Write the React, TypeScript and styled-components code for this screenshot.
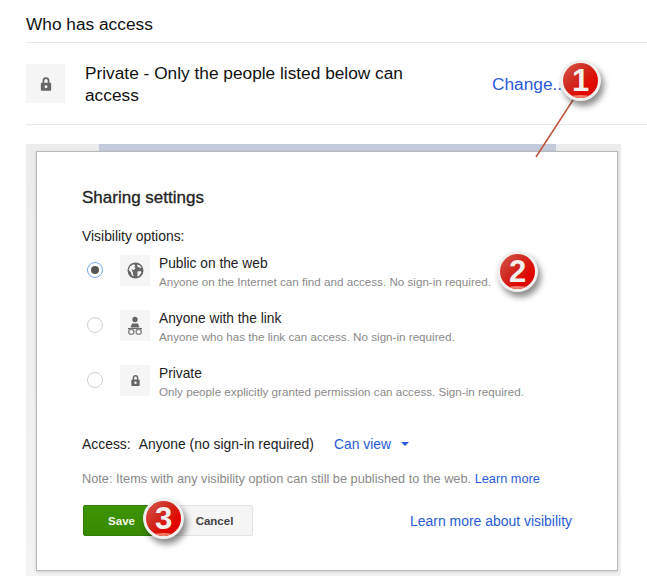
import React from "react";
import styled, { createGlobalStyle } from "styled-components";

const Global = createGlobalStyle`
  html, body { margin: 0; padding: 0; background: #fff; }
  body { font-family: "Liberation Sans", Arial, sans-serif; }
`;

const Page = styled.div`
  position: relative;
  width: 647px;
  height: 585px;
  overflow: hidden;
  background: #fff;
  padding: 0 0 0 26px;
  box-sizing: border-box;
`;

const Heading = styled.div`
  height: 42px;
  line-height: 48px;
  font-size: 17.3px;
  color: #111;
  border-bottom: 1px solid #e8e8e8;
  box-sizing: content-box;
`;

const AccessRow = styled.div`
  display: flex;
  align-items: flex-start;
  border-bottom: 1px solid #e8e8e8;
  padding-top: 21px;
  box-sizing: content-box;
  height: 60px;
`;

const LockTile = styled.div`
  width: 39px;
  height: 39px;
  background: #f5f5f5;
  display: flex;
  align-items: center;
  justify-content: center;
  flex: none;
`;

const AccessText = styled.div`
  width: 345px;
  margin-left: 20px;
  font-size: 17.3px;
  line-height: 22px;
  color: #111;
  margin-top: -2px;
`;

const ChangeLink = styled.a`
  margin-left: 62px;
  margin-top: 9px;
  font-size: 17.3px;
  line-height: 22px;
  color: #2a5bd7;
`;

const Frame = styled.div`
  position: relative;
  margin-top: 19px;
  width: 595px;
  height: 432px;
  background: linear-gradient(#ececec, #f3f3f3);
  padding: 7px 3px 0 10px;
  box-sizing: border-box;
`;

const Band = styled.div`
  position: absolute;
  top: 0;
  left: 73px;
  width: 457px;
  height: 7px;
  background: #c3cada;
`;

const Dialog = styled.div`
  position: relative;
  width: 582px;
  height: 420px;
  background: #fff;
  border: 1px solid #b9b9b9;
  box-sizing: border-box;
  padding: 36px 45px 0 45px;
  box-shadow: 0 1px 3px rgba(0, 0, 0, 0.15);
`;

const Title = styled.div`
  font-size: 17px;
  line-height: 20px;
  font-weight: 400;
  color: #222;
  -webkit-text-stroke: 0.3px #222;
`;

const SectionLabel = styled.div`
  margin-top: 20px;
  font-size: 13.9px;
  line-height: 16px;
  color: #222;
`;

const Options = styled.div`
  margin-top: 11px;
  display: flex;
  flex-direction: column;
  gap: 24px;
`;

const Option = styled.div`
  display: flex;
  align-items: flex-start;
  height: 31px;
`;

const Radio = styled.span<{ $on?: boolean }>`
  flex: none;
  width: 16px;
  height: 16px;
  margin: 7px 17px 0 5px;
  border-radius: 50%;
  border: 1px solid ${(p) => (p.$on ? "#7aa7f5" : "#d0d0d0")};
  box-sizing: border-box;
  display: flex;
  align-items: center;
  justify-content: center;
  &::after {
    content: "";
    display: ${(p) => (p.$on ? "block" : "none")};
    width: 8px;
    height: 8px;
    border-radius: 50%;
    background: #555;
  }
`;

const IconTile = styled.div`
  flex: none;
  width: 30px;
  height: 31px;
  background: #f5f5f5;
  display: flex;
  align-items: center;
  justify-content: center;
  margin-right: 9px;
`;

const OptionText = styled.div`
  display: flex;
  flex-direction: column;
  margin-top: 1px;
`;

const OptionTitle = styled.div`
  font-size: 13.75px;
  line-height: 16px;
  color: #222;
`;

const OptionDesc = styled.div`
  margin-top: 2px;
  font-size: 11.65px;
  line-height: 15px;
  color: #8a8a8a;
  white-space: nowrap;
`;

const AccessLine = styled.div`
  margin-top: 40px;
  display: flex;
  font-size: 13.9px;
  line-height: 16px;
  color: #222;
  align-items: center;
`;

const AccessValue = styled.span`
  margin-left: 8px;
`;

const CanView = styled.a`
  margin-left: 20px;
  color: #2a5bd7;
  display: inline-flex;
  align-items: center;
  gap: 10px;
  &::after {
    content: "";
    border-left: 4px solid transparent;
    border-right: 4px solid transparent;
    border-top: 4px solid #2a5bd7;
  }
`;

const Note = styled.div`
  margin-top: 19px;
  font-size: 12.75px;
  line-height: 16px;
  color: #8a8a8a;
  white-space: nowrap;
`;

const NoteLink = styled.a`
  color: #2a5bd7;
`;

const Actions = styled.div`
  margin-top: 18px;
  display: flex;
  align-items: center;
  width: 490px;
  padding-left: 1px;
  box-sizing: border-box;
`;

const SaveButton = styled.button`
  width: 90px;
  height: 31px;
  border: 1px solid #2f7d07;
  border-radius: 2px;
  background: linear-gradient(#3d9400, #398a00);
  color: #f2f5ea;
  font: bold 11.5px "Liberation Sans", Arial, sans-serif;
  padding: 0 13px 0 0;
`;

const CancelButton = styled.button`
  width: 80px;
  height: 31px;
  border: 1px solid #e4e4e4;
  border-radius: 2px;
  background: #f5f5f5;
  color: #444;
  font: bold 11.5px "Liberation Sans", Arial, sans-serif;
  padding: 0 0 0 3px;
`;

const MoreLink = styled.a`
  margin-left: auto;
  margin-top: 1px;
  font-size: 13.95px;
  line-height: 16px;
  color: #2a5bd7;
`;

const BadgeWrap = styled.div<{ $x: number; $y: number }>`
  position: absolute;
  left: ${(p) => p.$x}px;
  top: ${(p) => p.$y}px;
  width: 41px;
  height: 41px;
  border-radius: 50%;
  background: #f1efee;
  box-shadow: 3px 5px 6px rgba(0, 0, 0, 0.45);
  padding: 3px;
  box-sizing: border-box;
`;

const BadgeDisc = styled.div`
  position: relative;
  width: 35px;
  height: 35px;
  border-radius: 50%;
  background: linear-gradient(135deg, #d9584c 0%, #cf2a20 40%, #e00800 70%, #dd0000 100%);
  color: #f4f0ee;
  font: bold 31px/36px "Liberation Sans", Arial, sans-serif;
  text-align: center;
  overflow: hidden;
  &::after {
    content: "";
    position: absolute;
    left: 8px;
    right: 8px;
    bottom: 0;
    height: 3px;
    border-radius: 50%;
    background: #f0806a;
  }
`;

const Pointer = styled.svg`
  position: absolute;
  left: 530px;
  top: 98px;
`;

const Badge = ({ x, y, n }: { x: number; y: number; n: number }) => (
  <BadgeWrap $x={x} $y={y}>
    <BadgeDisc>{n}</BadgeDisc>
  </BadgeWrap>
);

const LockIcon = ({ size }: { size: number }) => (
  <svg width={size} height={size} viewBox="0 0 14 14">
    <path
      fill="#666"
      fillRule="evenodd"
      d="M4 6V4.2a3 3 0 0 1 6 0V6h.6c.5 0 .9.4.9.9v5.2c0 .5-.4.9-.9.9H3.400c-.5 0-.9-.4-.9-.9V6.900c0-.5.4-.9.9-.9H4zm1.500 0h3V4.200a1.500 1.500 0 0 0-3 0V6zM7 8.200a1.300 1.300 0 1 0 0 2.600 1.300 1.300 0 0 0 0-2.600z"
    />
  </svg>
);

const GlobeIcon = () => (
  <svg width="17" height="17" viewBox="0 0 17 17">
    <circle cx="8.500" cy="8.500" r="8" fill="#666" />
    <path fill="#f5f5f5" d="M3 4.500 6.500 2.200l1.800 1-1 1.500L8.500 6 7 8 4.500 7.200 5.800 10.500 6.600 14.200 5 13.500 3.800 10 1.800 8z" />
    <path fill="#f5f5f5" d="M10.500 9.500 13.500 9 14.500 10.500 12 14 10.500 14.500z" />
    <path fill="#f5f5f5" d="M10 2.500 13 3.500 14.800 6 12 5.500 10.500 4.500z" />
  </svg>
);

const LinkIcon = () => (
  <svg width="16" height="20" viewBox="0 0 16 20">
    <circle cx="8" cy="3.500" r="2.700" fill="#666" />
    <path fill="#666" d="M5 7.500h6l1.500 4h-9z" />
    <path fill="#666" d="M1 12h14v1H1z" />
    <circle cx="4.300" cy="15.800" r="2.600" fill="none" stroke="#888" strokeWidth="1.400" />
    <circle cx="11.700" cy="15.800" r="2.600" fill="none" stroke="#888" strokeWidth="1.400" />
  </svg>
);

export default function App() {
  return (
    <Page>
      <Global />
      <Heading>Who has access</Heading>
      <AccessRow>
        <LockTile>
          <LockIcon size={16} />
        </LockTile>
        <AccessText>Private - Only the people listed below can access</AccessText>
        <ChangeLink>Change...</ChangeLink>
      </AccessRow>
      <Frame>
        <Band />
        <Dialog>
          <Title>Sharing settings</Title>
          <SectionLabel>Visibility options:</SectionLabel>
          <Options>
            <Option>
              <Radio $on />
              <IconTile>
                <GlobeIcon />
              </IconTile>
              <OptionText>
                <OptionTitle>Public on the web</OptionTitle>
                <OptionDesc>Anyone on the Internet can find and access. No sign-in required.</OptionDesc>
              </OptionText>
            </Option>
            <Option>
              <Radio />
              <IconTile>
                <LinkIcon />
              </IconTile>
              <OptionText>
                <OptionTitle>Anyone with the link</OptionTitle>
                <OptionDesc>Anyone who has the link can access. No sign-in required.</OptionDesc>
              </OptionText>
            </Option>
            <Option>
              <Radio />
              <IconTile>
                <LockIcon size={13} />
              </IconTile>
              <OptionText>
                <OptionTitle>Private</OptionTitle>
                <OptionDesc>Only people explicitly granted permission can access. Sign-in required.</OptionDesc>
              </OptionText>
            </Option>
          </Options>
          <AccessLine>
            Access:
            <AccessValue>Anyone (no sign-in required)</AccessValue>
            <CanView>Can view</CanView>
          </AccessLine>
          <Note>
            Note: Items with any visibility option can still be published to the web. <NoteLink>Learn more</NoteLink>
          </Note>
          <Actions>
            <SaveButton>Save</SaveButton>
            <CancelButton>Cancel</CancelButton>
            <MoreLink>Learn more about visibility</MoreLink>
          </Actions>
        </Dialog>
      </Frame>
      <Pointer width="50" height="62" viewBox="0 0 50 62">
        <line x1="43" y1="2" x2="6" y2="59" stroke="#c0533f" strokeWidth="1.500" />
      </Pointer>
      <Badge x={560} y={60} n={1} />
      <Badge x={497} y={251} n={2} />
      <Badge x={143} y={498} n={3} />
    </Page>
  );
}
